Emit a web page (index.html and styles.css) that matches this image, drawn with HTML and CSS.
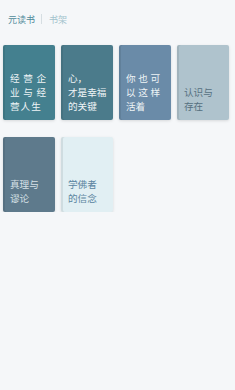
FILE: index.html
```html
<!DOCTYPE html>
<html lang="zh-CN">
<head>
  <meta charset="UTF-8" />
  <meta name="viewport" content="width=device-width, initial-scale=1.0" />
  <title>元读书 - 书架</title>
  <link rel="stylesheet" href="styles.css">
</head>
<body>
  <!-- 顶部 -->
  <div class="header">
    <span class="brand">元读书</span>
    <span class="divider"></span>
    <span class="tab">书架</span>
  </div>

  <!-- 书架 -->
  <div class="shelf">
    <div class="book teal">
      <p class="title wide">经营企<br>业与经<br><span class="tail">营人生</span></p>
    </div>
    <div class="book slate">
      <p class="title">心，<br>才是幸福<br>的关键</p>
    </div>
    <div class="book steel">
      <p class="title mid">你也可<br>以这样<br><span class="tail">活着</span></p>
    </div>
    <div class="book mist">
      <p class="title">认识与<br>存在</p>
    </div>
    <div class="book dusk">
      <p class="title">真理与<br>谬论</p>
    </div>
    <div class="book ice">
      <p class="title">学佛者<br>的信念</p>
    </div>
  </div>
</body>
</html>
```

FILE: styles.css
```css
* {
  margin: 0;
  padding: 0;
  box-sizing: border-box;
}

body {
  background: #f5f7f9;
  font-family: 'Noto Sans CJK SC', 'Noto Sans', sans-serif;
  color: #333;
}

.header {
  display: flex;
  align-items: center;
  height: 32px;
  padding: 6px 0 0 8px;
  font-size: 9px;
}

.brand {
  color: #4f8a9a;
}

.divider {
  width: 1px;
  height: 10px;
  margin: 0 7px 0 6px;
  background: #d6dee2;
}

.tab {
  color: #a3c3cd;
}

.shelf {
  display: grid;
  grid-template-columns: repeat(4, 52px);
  grid-auto-rows: 75px;
  column-gap: 6px;
  row-gap: 17px;
  padding: 13px 3px 0;
}

.book {
  display: flex;
  align-items: flex-end;
  padding: 0 5px 7px 7px;
  border-radius: 2px;
  box-shadow: inset 2px 0 0 rgba(0, 0, 0, 0.08), 0 1px 3px rgba(0, 0, 0, 0.12);
}

.title {
  font-size: 9.6px;
  line-height: 14px;
  color: #eef4f6;
  white-space: nowrap;
}

.title.wide {
  letter-spacing: 3.6px;
}

.title.wide .tail {
  letter-spacing: 1px;
}

.title.mid {
  letter-spacing: 2.7px;
}

.title.mid .tail {
  letter-spacing: 0;
}

.teal { background: #44808f; }
.slate { background: #4b7b8b; }
.steel { background: #6a8ba8; }
.mist { background: #afc3cd; }
.mist .title { color: #56707f; }
.dusk { background: #5e7a8c; }
.dusk .title { color: #d7e1e7; }
.ice { background: #e1eff3; }
.ice .title { color: #5a84a0; }
```
